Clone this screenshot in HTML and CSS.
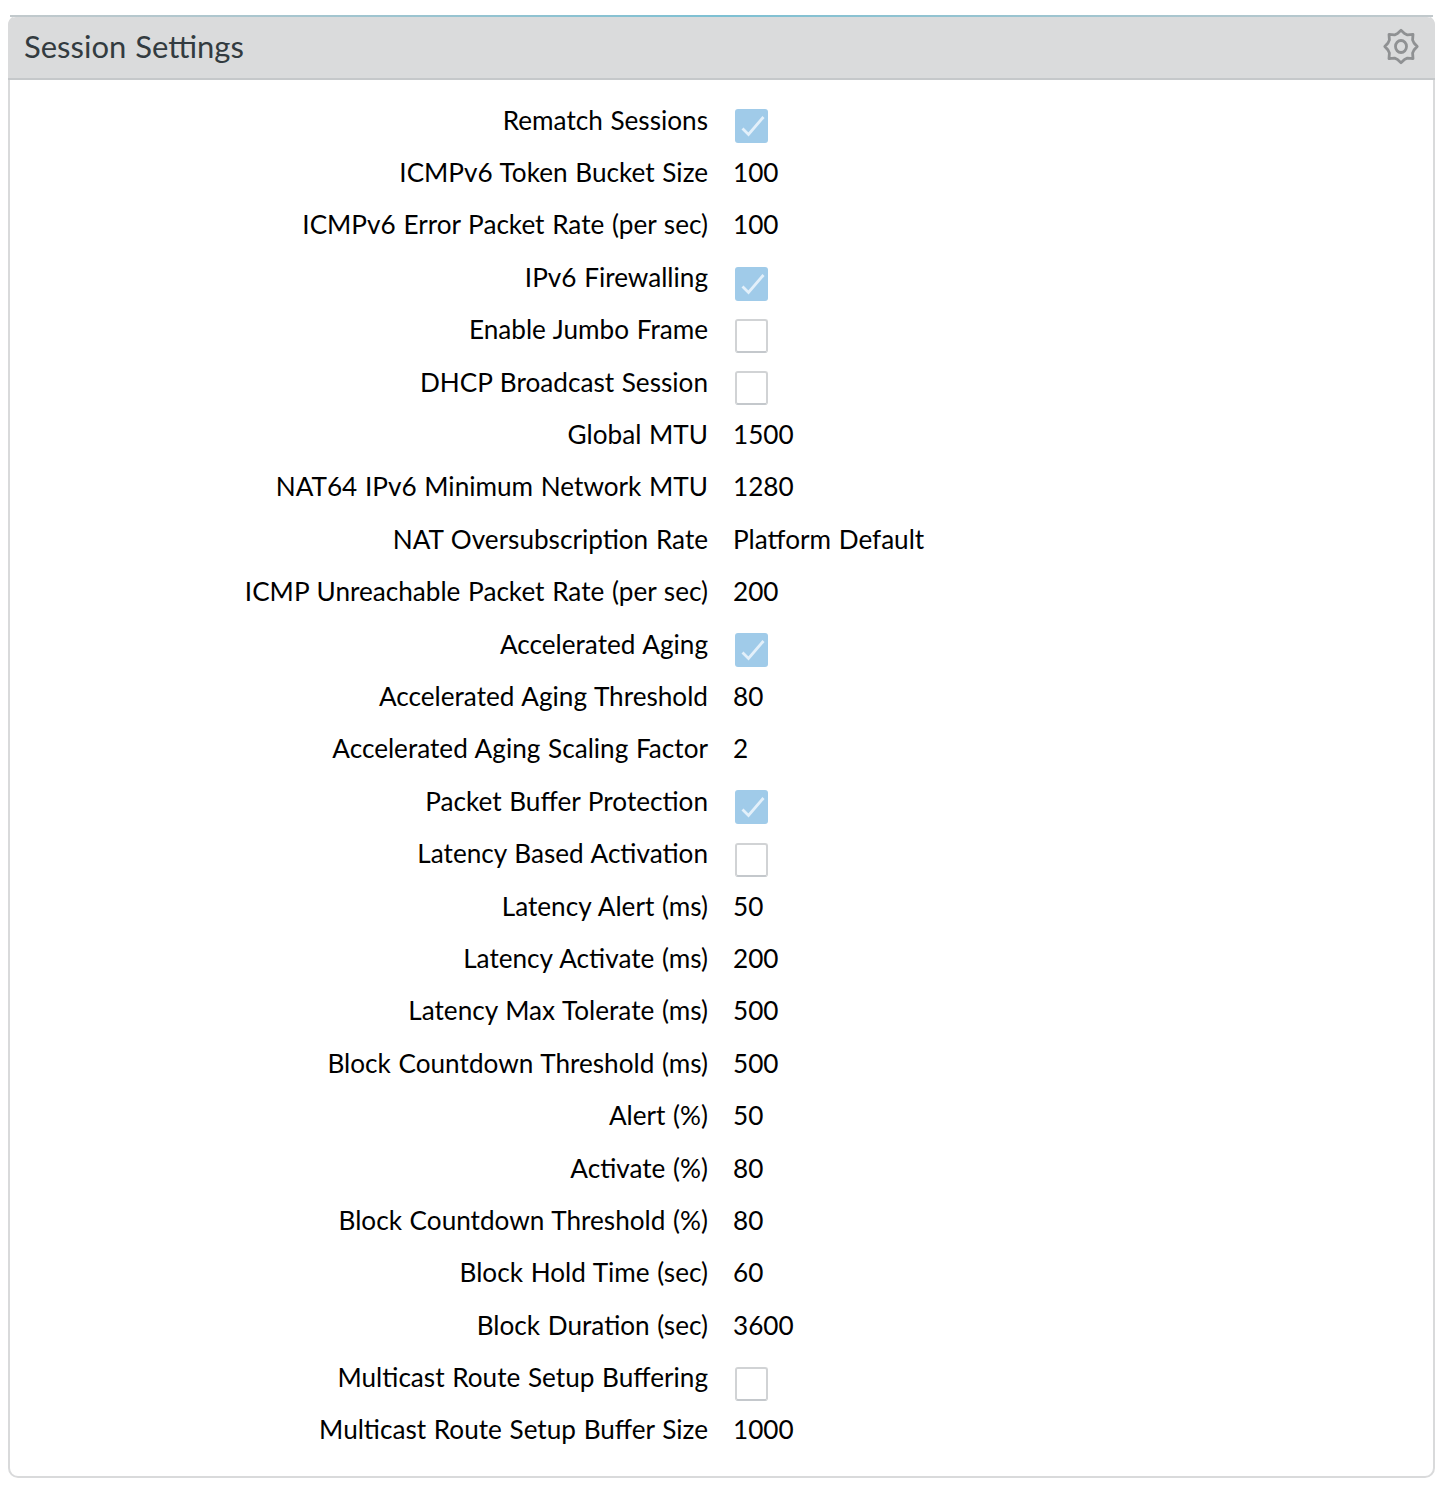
FILE: index.html
```
<!DOCTYPE html>
<html lang="en">
<head>
<meta charset="utf-8">
<title>Session Settings</title>
<link rel="stylesheet" href="styles.css">
</head>
<body>
<section class="panel">
  <div class="accent"></div>
  <header class="panel-header">
    <h1>Session Settings</h1>
    <svg class="gear" viewBox="0 0 36 36" fill="none" stroke="#8f9193" stroke-width="2.8" stroke-linejoin="round">
      <path d="M14.500 5.500 18 2.300 21.500 5.500 24.500 6.900 30 6.300 29.600 12 31 15 34.200 18.500 31 22 29.600 25 30 30.700 24.500 30.100 21.500 31.500 18 34.700 14.500 31.500 11.500 30.100 6 30.700 6.400 25 5 22 1.800 18.500 5 15 6.400 12 6 6.300 11.500 6.900Z"/>
      <ellipse cx="18" cy="18.500" rx="5.500" ry="6"/>
    </svg>
  </header>
  <dl class="settings">
    <div class="row"><dt>Rematch Sessions</dt><dd><span class="check on"><svg viewBox="0 0 33 34"><path d="M7.500 19.500 13.500 25.500 28.500 8"/></svg></span></dd></div>
    <div class="row"><dt>ICMPv6 Token Bucket Size</dt><dd>100</dd></div>
    <div class="row"><dt>ICMPv6 Error Packet Rate (per sec)</dt><dd>100</dd></div>
    <div class="row"><dt>IPv6 Firewalling</dt><dd><span class="check on"><svg viewBox="0 0 33 34"><path d="M7.500 19.500 13.500 25.500 28.500 8"/></svg></span></dd></div>
    <div class="row"><dt>Enable Jumbo Frame</dt><dd><span class="check"></span></dd></div>
    <div class="row"><dt>DHCP Broadcast Session</dt><dd><span class="check"></span></dd></div>
    <div class="row"><dt>Global MTU</dt><dd>1500</dd></div>
    <div class="row"><dt>NAT64 IPv6 Minimum Network MTU</dt><dd>1280</dd></div>
    <div class="row"><dt>NAT Oversubscription Rate</dt><dd>Platform Default</dd></div>
    <div class="row"><dt>ICMP Unreachable Packet Rate (per sec)</dt><dd>200</dd></div>
    <div class="row"><dt>Accelerated Aging</dt><dd><span class="check on"><svg viewBox="0 0 33 34"><path d="M7.500 19.500 13.500 25.500 28.500 8"/></svg></span></dd></div>
    <div class="row"><dt>Accelerated Aging Threshold</dt><dd>80</dd></div>
    <div class="row"><dt>Accelerated Aging Scaling Factor</dt><dd>2</dd></div>
    <div class="row"><dt>Packet Buffer Protection</dt><dd><span class="check on"><svg viewBox="0 0 33 34"><path d="M7.500 19.500 13.500 25.500 28.500 8"/></svg></span></dd></div>
    <div class="row"><dt>Latency Based Activation</dt><dd><span class="check"></span></dd></div>
    <div class="row"><dt>Latency Alert (ms)</dt><dd>50</dd></div>
    <div class="row"><dt>Latency Activate (ms)</dt><dd>200</dd></div>
    <div class="row"><dt>Latency Max Tolerate (ms)</dt><dd>500</dd></div>
    <div class="row"><dt>Block Countdown Threshold (ms)</dt><dd>500</dd></div>
    <div class="row"><dt>Alert (%)</dt><dd>50</dd></div>
    <div class="row"><dt>Activate (%)</dt><dd>80</dd></div>
    <div class="row"><dt>Block Countdown Threshold (%)</dt><dd>80</dd></div>
    <div class="row"><dt>Block Hold Time (sec)</dt><dd>60</dd></div>
    <div class="row"><dt>Block Duration (sec)</dt><dd>3600</dd></div>
    <div class="row"><dt>Multicast Route Setup Buffering</dt><dd><span class="check"></span></dd></div>
    <div class="row"><dt>Multicast Route Setup Buffer Size</dt><dd>1000</dd></div>
  </dl>
</section>
</body>
</html>
```
FILE: styles.css
```
* { box-sizing: border-box; }
body {
  margin: 0;
  padding: 15px 3px 0 8px;
  background: #fff;
  color: #000;
  font-family: Lato, "Liberation Sans", sans-serif;
}
.panel {
  height: 1463px;
  border: 2px solid #d9dadb;
  border-top: 0;
  border-radius: 10px;
}
.accent {
  height: 2px;
  background: linear-gradient(90deg, #c2c9cc, #7dc0d3 50%, #c2c9cc);
}
.panel-header {
  display: flex;
  align-items: center;
  justify-content: space-between;
  height: 63px;
  margin: 0 -2px;
  padding: 0 16px 3px 16px;
  background: #dadbdc;
  border-bottom: 2px solid #c5c8ca;
  border-radius: 8px 8px 0 0;
}
.panel-header h1 {
  margin: 0;
  color: #333b40;
  font-size: 31px;
  font-weight: 400;
  line-height: 36px;
  word-spacing: 1px;
}
.gear { width: 36px; height: 36px; overflow: visible; }
.settings {
  margin: 0;
  padding-top: 13.7px;
  font-size: 26.15px;
  word-spacing: 1px;
}
.row {
  display: grid;
  grid-template-columns: 698px 1fr;
  column-gap: 25px;
  height: 52.4px;
  line-height: 52.4px;
  white-space: nowrap;
}
dt { text-align: right; }
dd { margin: 0; }
.check {
  display: block;
  width: 33px;
  height: 34px;
  margin: 15.7px 0 0 2px;
  border: 2px solid #d1d3d5;
  border-bottom-color: #c4c8cc;
  border-radius: 3px;
}
.check.on { border: 0; background: #a0cbe9; }
.check svg {
  display: block;
  width: 33px;
  height: 34px;
  fill: none;
  stroke: #e3f0fa;
  stroke-width: 2.8;
}
```
